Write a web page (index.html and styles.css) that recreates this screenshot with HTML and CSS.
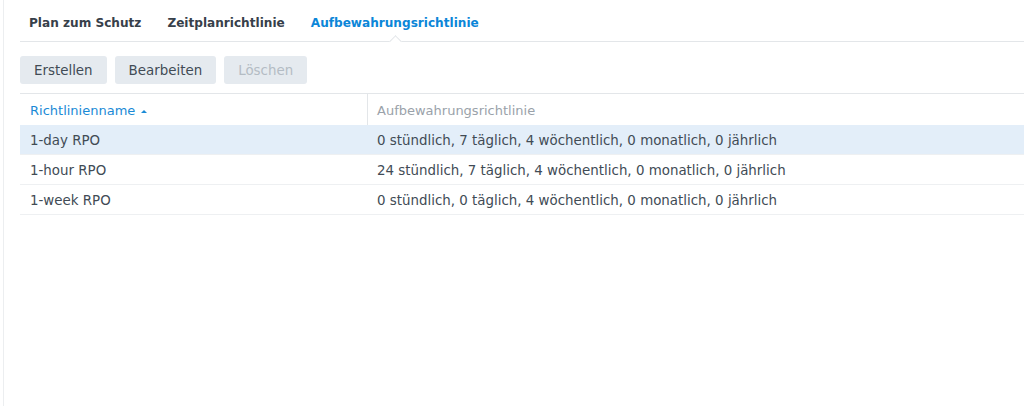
FILE: index.html
```html
<!DOCTYPE html>
<html lang="de">
<head>
    <meta charset="UTF-8">
    <title>Aufbewahrungsrichtlinie</title>
    <link rel="stylesheet" href="styles.css">
</head>
<body>
    <div class="panel">
        <!-- Tab strip -->
        <div class="tabs">
            <span class="tab">Plan zum Schutz</span>
            <span class="tab">Zeitplanrichtlinie</span>
            <span class="tab active">Aufbewahrungsrichtlinie</span>
        </div>

        <!-- Toolbar -->
        <div class="toolbar">
            <button class="btn">Erstellen</button>
            <button class="btn">Bearbeiten</button>
            <button class="btn" disabled>Löschen</button>
        </div>

        <!-- Policy grid -->
        <div class="grid">
            <div class="row head">
                <div class="cell name sorted">Richtlinienname <span class="sort-arrow"></span></div>
                <div class="cell">Aufbewahrungsrichtlinie</div>
            </div>
            <div class="row selected">
                <div class="cell name">1-day RPO</div>
                <div class="cell">0 stündlich, 7 täglich, 4 wöchentlich, 0 monatlich, 0 jährlich</div>
            </div>
            <div class="row">
                <div class="cell name">1-hour RPO</div>
                <div class="cell">24 stündlich, 7 täglich, 4 wöchentlich, 0 monatlich, 0 jährlich</div>
            </div>
            <div class="row">
                <div class="cell name">1-week RPO</div>
                <div class="cell">0 stündlich, 0 täglich, 4 wöchentlich, 0 monatlich, 0 jährlich</div>
            </div>
        </div>
    </div>
</body>
</html>
```

FILE: styles.css
```css
/* Base */
html, body {
    margin: 0;
    padding: 0;
    height: 100%;
    background: #ffffff;
    font-family: "DejaVu Sans", Verdana, sans-serif;
    font-size: 13.4px;
    color: #414b55;
}

.panel {
    height: 100%;
    margin-left: 3px;
    border-left: 1px solid #eceef0;
    padding: 0 0 0 16px;
    box-sizing: border-box;
}

/* Tabs */
.tabs {
    display: flex;
    gap: 26px;
    height: 42px;
    padding-left: 9px;
    border-bottom: 1px solid #e3e6e9;
    box-sizing: border-box;
}

.tab {
    position: relative;
    padding-top: 16px;
    font-size: 12.1px;
    font-weight: bold;
    color: #37404a;
}

.tab.active {
    color: #0b86d8;
}

/* notch under the active tab */
.tab.active::after {
    content: "";
    position: absolute;
    left: 50%;
    bottom: -5px;
    width: 8px;
    height: 8px;
    margin-left: -4px;
    background: #ffffff;
    border-left: 1px solid #e3e6e9;
    border-top: 1px solid #e3e6e9;
    transform: rotate(45deg);
}

/* Toolbar */
.toolbar {
    display: flex;
    gap: 8px;
    padding: 14px 0 9px;
}

.btn {
    height: 28px;
    padding: 0 14px;
    border: none;
    border-radius: 3px;
    background: #e5eaef;
    font-family: inherit;
    font-size: 13.4px;
    color: #414b55;
}

.btn:disabled {
    color: #b4bcc4;
}

/* Grid */
.grid {
    border-top: 1px solid #e3e6e9;
}

.row {
    display: grid;
    grid-template-columns: 347px 1fr;
    height: 30px;
    box-sizing: border-box;
    align-items: center;
    border-bottom: 1px solid #eef0f2;
}

.row.head {
    height: 31px;
    border-bottom: none;
    font-size: 13px;
    color: #9aa2aa;
}

.row.head .cell + .cell {
    border-left: 1px solid #e3e6e9;
    align-self: stretch;
    display: flex;
    align-items: center;
    padding-left: 9px;
}

.row.selected {
    background: #e3eef9;
}

.cell {
    padding: 1px 0 0 10px;
    white-space: nowrap;
}

.cell.sorted {
    color: #1a8ad6;
}

.sort-arrow {
    display: inline-block;
    width: 0;
    height: 0;
    margin-left: 2px;
    vertical-align: 2px;
    border-left: 3px solid transparent;
    border-right: 3px solid transparent;
    border-bottom: 3px solid #1a8ad6;
}
```
